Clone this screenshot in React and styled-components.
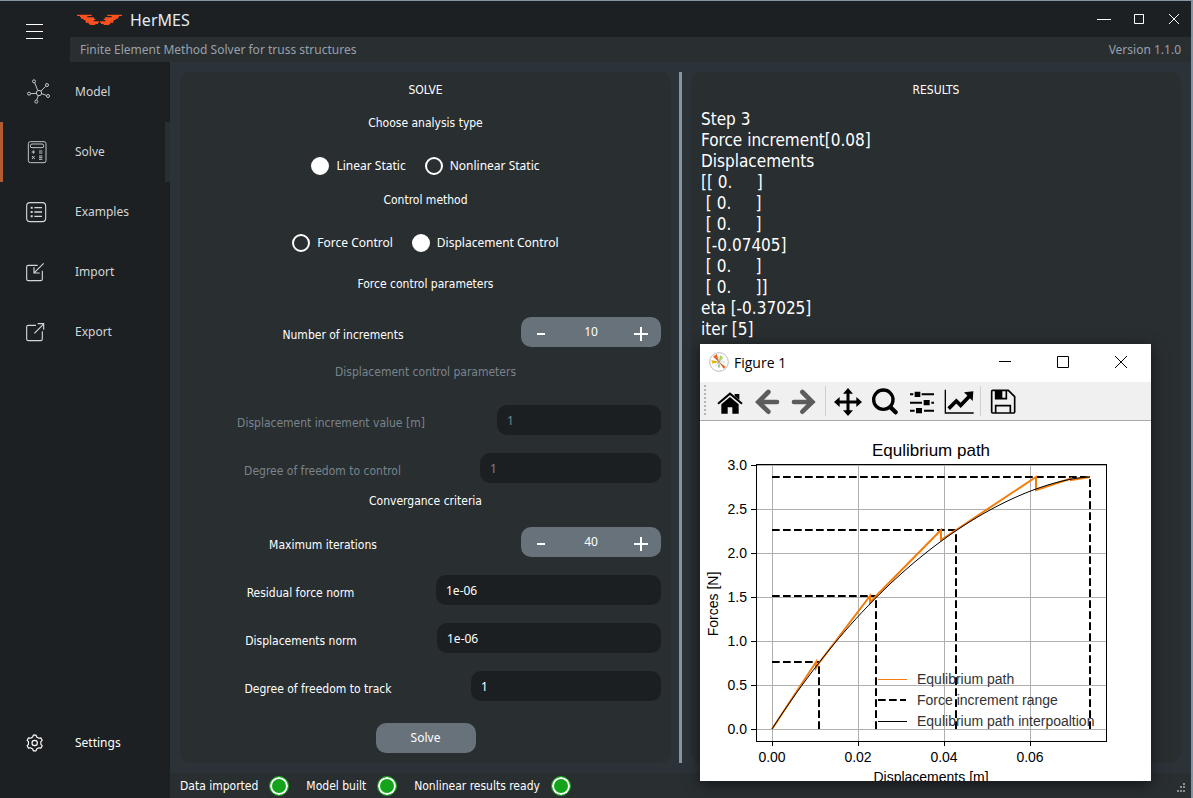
import React, { useState } from "react";
import styled, { createGlobalStyle } from "styled-components";

const c = {
  dark: "#1c2022",
  panel: "#292e31",
  field: "#1c1f21",
  body: "#2c3338",
  button: "#68727b",
  edge: "#8496a5",
  muted: "#7a848c",
  text: "#ffffff",
};

const wide = `"Noto Sans", sans-serif`;

const GlobalStyle = createGlobalStyle`
  *, *::before, *::after { box-sizing: border-box; }
  body { margin: 0; background: ${c.dark}; }
  button, input { font: inherit; color: inherit; }
  h1, h2, p, pre { margin: 0; font: inherit; }
`;

const Shell = styled.div`
  position: relative;
  display: flex;
  flex-direction: column;
  min-height: 100vh;
  border-top: 1px solid ${c.edge};
  border-right: 2px solid ${c.edge};
  background: ${c.dark};
  color: ${c.text};
  font: 12px/16px "DejaVu Sans Condensed", "Noto Sans", sans-serif;
`;

const Top = styled.header`
  display: flex;
`;

const MenuButton = styled.button`
  width: 70px;
  border: 0;
  padding: 0;
  background: none;
  svg { display: block; margin: 0 26px; }
`;

const TopColumn = styled.div`
  flex: 1;
`;

const TitleBar = styled.div`
  display: flex;
  align-items: center;
  height: 36px;
  padding-left: 7px;
`;

const LogoArt = styled.svg`
  margin-top: 2px;
`;

const AppName = styled.h1`
  flex: 1;
  padding: 2px 0 0 8px;
  font: 16px/22px ${wide};
  color: #e3ebf2;
`;

const WindowButton = styled.button`
  display: grid;
  place-items: center;
  width: 35px;
  height: 36px;
  border: 0;
  padding: 0;
  background: none;
`;

const SubBar = styled.div`
  display: flex;
  justify-content: space-between;
  padding: 0 10px;
  background: ${c.panel};
  color: #98a1ab;
  font: 12px/25px ${wide};
`;

const Body = styled.div`
  display: flex;
  flex: 1;
`;

const Nav = styled.nav`
  display: flex;
  flex-direction: column;
  width: 170px;
  padding-bottom: 25px;
`;

const NavItem = styled.a`
  display: flex;
  align-items: center;
  gap: 24px;
  height: 60px;
  padding-left: 20px;
  border-left: 3px solid ${(p) => (p.$active ? "#b35c33" : "transparent")};
  border-right: 5px solid ${(p) => (p.$active ? c.panel : "transparent")};
  margin-top: ${(p) => (p.$last ? "auto" : "0")};
  color: ${(p) => (p.$last ? "#ffffff" : "#d3d6d8")};
  font-family: ${wide};
  text-decoration: none;
`;

const Main = styled.main`
  display: flex;
  flex: 1;
  flex-direction: column;
  background: ${c.body};
`;

const Panels = styled.div`
  display: grid;
  grid-template-columns: minmax(0, 491fr) 20px minmax(0, 490fr);
  flex: 1;
  padding: 10px;
`;

const Panel = styled.section`
  padding: 10px;
  border-radius: 10px;
  background: ${c.panel};
`;

const Splitter = styled.div`
  width: 3px;
  margin-left: 8px;
  background: ${c.edge};
`;

const Title = styled.h2`
  text-align: center;
  color: ${(p) => (p.$muted ? c.muted : c.text)};
`;

const Group = styled.div`
  display: flex;
  flex-direction: column;
  gap: ${(p) => p.$gap}px;
  padding-top: ${(p) => p.$top}px;
`;

const Fields = styled.div`
  display: flex;
  flex-direction: column;
  gap: 18px;
`;

const Radios = styled.div`
  display: flex;
  justify-content: center;
  gap: 19px;
`;

const RadioLabel = styled.label`
  display: flex;
  align-items: center;
  gap: 7px;
  font: 12px/18px ${wide};
`;

const RadioInput = styled.input`
  appearance: none;
  width: 18px;
  height: 18px;
  margin: 0;
  border: 2px solid #fff;
  border-radius: 50%;
  background: ${c.panel};
  &:checked { background: #fff; }
`;

const Row = styled.div`
  display: grid;
  grid-template-columns: ${(p) => p.$columns};
  column-gap: ${(p) => p.$gap || 25}px;
  color: ${(p) => (p.$muted ? c.muted : c.text)};
`;

const RowLabel = styled.label`
  padding-top: 10px;
  text-align: center;
  white-space: nowrap;
`;

const TextBox = styled.input`
  width: 100%;
  min-width: 0;
  height: 30px;
  padding: 0 10px;
  border: 0;
  border-radius: 10px;
  background: ${c.field};
  font-family: ${wide};
  &:disabled { color: ${c.muted}; }
`;

const Spinner = styled.div`
  display: flex;
  height: 30px;
  border-radius: 10px;
  background: ${c.button};
`;

const StepButton = styled.button`
  width: 40px;
  border: 0;
  padding: 0;
  background: none;
  svg { display: block; margin: 4px auto 0; }
`;

const StepValue = styled.input`
  width: 60px;
  border: 0;
  padding: 0;
  background: none;
  font-family: ${wide};
  text-align: center;
`;

const SolveButton = styled.button`
  display: block;
  width: 100px;
  height: 30px;
  margin: 22px auto 0;
  border: 0;
  border-radius: 10px;
  background: ${c.button};
  font-family: ${wide};
`;

const Output = styled.pre`
  padding-top: 11px;
  font-size: 17px;
  line-height: 21px;
  white-space: pre;
`;

const StatusBar = styled.footer`
  display: flex;
  align-items: center;
  gap: 17px;
  height: 25px;
  padding: 0 5px 0 10px;
  background: ${c.panel};
`;

const Status = styled.span`
  display: flex;
  align-items: center;
  gap: 11px;
`;

const Led = styled.i`
  width: 20px;
  height: 20px;
  border: 1px solid #17a51d;
  border-radius: 50%;
  background: #14a31a;
  box-shadow: inset 0 0 0 2px #fff;
`;

const Grip = styled.svg`
  margin: 5px 0 0 auto;
`;

const Figure = styled.div`
  position: absolute;
  right: 40px;
  bottom: 17px;
  width: 451px;
  overflow: hidden;
  background: #fff;
  color: #000;
  box-shadow: 0 3px 14px rgba(0, 0, 0, 0.55);
`;

const FigureBar = styled.div`
  display: flex;
  align-items: center;
  height: 38px;
  padding: 0 1px 2px 9px;
`;

const FigureTitle = styled.h2`
  flex: 1;
  padding: 2px 0 0 5px;
  font: 14px/20px "Open Sans", sans-serif;
`;

const FigureButton = styled(WindowButton)`
  width: 58px;
`;

const Toolbar = styled.div`
  display: flex;
  align-items: center;
  height: 39px;
  padding-left: 4px;
  border-bottom: 1px solid #a9a9a9;
  background: #f0f0f0;
`;

const Handle = styled.span`
  width: 2px;
  height: 32px;
  margin-right: 5px;
  background: repeating-linear-gradient(#b4b4b4 0 2px, transparent 2px 4px);
`;

const Tool = styled.button`
  display: grid;
  place-items: center;
  width: 37px;
  height: 36px;
  border: 0;
  padding: 2px 0 0;
  background: none;
`;

const ToolRule = styled.span`
  width: 1px;
  height: 30px;
  margin: 0 3px;
  background: #cfcfcf;
`;

const Plot = styled.svg`
  display: block;
  width: 100%;
  font-family: "Liberation Sans", Arial, sans-serif;
  font-size: 14px;
`;

function gearPath(cx, cy) {
  const at = (r, deg) => {
    const a = (deg * Math.PI) / 180;
    return `${(cx + r * Math.cos(a)).toFixed(1)} ${(cy + r * Math.sin(a)).toFixed(1)}`;
  };
  const pts = [];
  for (let k = 0; k < 6; k++) {
    const a = -90 + 60 * k;
    pts.push(at(24, a - 10), at(24, a + 10), at(19, a + 18), at(19, a + 42));
  }
  return `M${pts.join("L")}Z`;
}

const navItems = [
  {
    name: "Model",
    box: "69 234 84 84",
    art: (
      <>
        <circle cx="117" cy="279" r="8" />
        <circle cx="102" cy="244" r="4.5" />
        <circle cx="141" cy="255" r="4.5" />
        <circle cx="144" cy="288" r="4.5" />
        <circle cx="109" cy="305" r="4.5" />
        <circle cx="87" cy="281" r="4.5" />
        <path d="M104 248L113 271M137 259L123 273M139 286L125 281M110 300L115 287M92 281L109 280" />
      </>
    ),
    thin: true,
  },
  {
    name: "Solve",
    box: "69 414 84 84",
    art: (
      <>
        <rect x="85" y="425" width="53" height="63" rx="6" />
        <rect x="91" y="432" width="40" height="11" rx="5" />
        <path d="M95 456H105M100 451V461M117 453H127M117 459H127M96 468L104 477M104 468L96 477M117 468H127M117 473H127M117 478H127" />
      </>
    ),
    thin: true,
  },
  {
    name: "Examples",
    box: "69 54 84 84",
    art: (
      <>
        <rect x="80" y="68" width="57" height="57" rx="10" />
        <path d="M103 83H126M103 96H126M103 109H126" strokeWidth="4" />
        <path d="M92 83H98M92 96H98M92 109H98" strokeWidth="6" />
      </>
    ),
  },
  {
    name: "Import",
    box: "69 234 84 84",
    art: (
      <>
        <path d="M113 256H85Q80 256 80 261V297Q80 302 85 302H122Q127 302 127 297V272" />
        <path d="M131 250L103 278M102 262V279H119" />
      </>
    ),
  },
  {
    name: "Export",
    box: "69 414 84 84",
    art: (
      <>
        <path d="M108 436H85Q80 436 80 441V477Q80 482 85 482H122Q127 482 127 477V454" />
        <path d="M103 460L130 433M113 431H131V449" />
      </>
    ),
  },
];

function NavIcon({ box, thin, children }) {
  return (
    <svg width="28" height="28" viewBox={box} fill="none" stroke="currentColor" strokeWidth={thin ? 2.7 : 3.4} aria-hidden="true">
      {children}
    </svg>
  );
}

function Logo() {
  const wing = (
    <path d="M231 46H275M240 50H262M243 54H282M250 58H286M256 62H281M257 66H297M266 70H294M269 73H286" />
  );
  return (
    <LogoArt width="45" height="12" viewBox="231 42 135 36" fill="none" stroke="#f8501f" strokeWidth="3.8" aria-hidden="true">
      {wing}
      <g transform="translate(597 0) scale(-1 1)">{wing}</g>
    </LogoArt>
  );
}

function FieldRow({ id, label, value, muted, split }) {
  return (
    <Row $muted={muted} $columns={`minmax(0, ${split[0]}fr) minmax(0, ${split[1]}fr)`}>
      <RowLabel htmlFor={id}>{label}</RowLabel>
      <TextBox id={id} defaultValue={value} disabled={muted} />
    </Row>
  );
}

function SpinRow({ id, label, start, gap }) {
  const [value, setValue] = useState(start);
  return (
    <Row $columns="minmax(0, 1fr) 140px" $gap={gap}>
      <RowLabel htmlFor={id}>{label}</RowLabel>
      <Spinner>
        <StepButton aria-label={`Decrease ${label}`} onClick={() => setValue(value - 1)}>
          <svg width="16" height="16" viewBox="0 0 16 16" stroke="#fff" strokeWidth="2">
            <path d="M4 8H12" />
          </svg>
        </StepButton>
        <StepValue id={id} value={value} onChange={(e) => setValue(Number(e.target.value) || 0)} />
        <StepButton aria-label={`Increase ${label}`} onClick={() => setValue(value + 1)}>
          <svg width="16" height="16" viewBox="0 0 16 16" stroke="#fff" strokeWidth="2">
            <path d="M1 8H15M8 1V15" />
          </svg>
        </StepButton>
      </Spinner>
    </Row>
  );
}

function Radio({ name, label, checked }) {
  return (
    <RadioLabel>
      <RadioInput type="radio" name={name} defaultChecked={checked} />
      {label}
    </RadioLabel>
  );
}

const output = `Step 3
Force increment[0.08]
Displacements
[[ 0.     ]
 [ 0.     ]
 [ 0.     ]
 [-0.07405]
 [ 0.     ]
 [ 0.     ]]
eta [-0.37025]
iter [5]`;

const tools = [
  {
    name: "Home",
    cx: 105,
    art: (
      <>
        <path d="M69 191L105 161L141 191" fill="none" stroke="#000" strokeWidth="6" />
        <path d="M79 193L105 171L131 193V221H112V202H98V221H79ZM119 162H133V180L119 168Z" />
      </>
    ),
  },
  {
    name: "Back",
    cx: 216,
    art: <path d="M220 156L190 186L220 215M192 186H246" fill="none" stroke="#5c5c5c" strokeWidth="14" strokeLinecap="round" />,
  },
  {
    name: "Forward",
    cx: 327,
    art: <path d="M322 156L352 186L322 215M297 186H350" fill="none" stroke="#5c5c5c" strokeWidth="14" strokeLinecap="round" />,
    rule: true,
  },
  {
    name: "Pan",
    cx: 459,
    art: (
      <>
        <path d="M427 186H491M459 154V218" stroke="#000" strokeWidth="9" />
        <path d="M417 186L434 171V201ZM501 186L484 171V201ZM459 144L444 161H474ZM459 228L444 211H474Z" />
      </>
    ),
  },
  {
    name: "Zoom",
    cx: 570,
    art: (
      <g fill="none" stroke="#000" strokeLinecap="round">
        <circle cx="565" cy="179" r="29" strokeWidth="10" />
        <path d="M588 203L602 217" strokeWidth="13" />
      </g>
    ),
  },
  {
    name: "Configure subplots",
    cx: 681,
    art: (
      <>
        <path d="M645 163H655M680 163H717M645 188H681M709 188H717M645 212H659M687 212H717" stroke="#000" strokeWidth="6" />
        <path d="M659 155H676V171H659ZM686 180H704V196H686ZM663 204H681V220H663Z" />
      </>
    ),
  },
  {
    name: "Edit axis",
    cx: 792,
    art: (
      <>
        <path d="M751 149V219H836" fill="none" stroke="#000" strokeWidth="4" />
        <path d="M761 206L784 183L797 196L824 168" fill="none" stroke="#000" strokeWidth="11" />
        <path d="M807 157L835 154L833 183Z" />
      </>
    ),
    rule: true,
  },
  {
    name: "Save",
    cx: 924,
    art: (
      <>
        <path
          d="M893 151H940L959 170V216Q959 219 956 219H893Q890 219 890 216V154Q890 151 893 151ZM902 219V197H946V219M934 151V176H902V151"
          fill="none"
          stroke="#000"
          strokeWidth="5"
        />
        <path d="M902 151H922V176H902Z" />
      </>
    ),
  },
];

// Plot coordinates: 1.0 N is 88 px high, 0.02 m is 86 px wide.
const yOf = (n) => 308 - n * 88;
const xOf = (m) => 72 + m * 4300;

const steps = [
  [119, 241],
  [176, 175],
  [256, 109],
  [390, 56],
];

// Softening response: the slope falls to zero at the last increment.
const interpolation = Array.from({ length: 54 }, (_, i) => {
  const u = i / 53;
  const f = 1 - Math.pow(1 - u, 1.95 - 0.28 * u);
  return `${72 + 318 * u} ${(308 - 252 * f).toFixed(2)}`;
}).join("L");

function Chart() {
  const ys = [0, 0.5, 1, 1.5, 2, 2.5, 3];
  const xs = [0, 0.02, 0.04, 0.06];
  return (
    <Plot viewBox="0 0 451 360" role="img" aria-label="Equlibrium path">
      <g stroke="#b0b0b0" shapeRendering="crispEdges">
        {ys.map((v) => <path key={v} d={`M56 ${yOf(v) + 0.5}H406`} />)}
        {xs.map((v) => <path key={v} d={`M${xOf(v) + 0.5} 43V320`} />)}
      </g>
      <g stroke="#000" strokeWidth="2" strokeDasharray="7.7 3.3">
        {steps.map(([x, y]) => <path key={x} d={`M72 ${y}H${x}M${x} 308V${y}`} />)}
      </g>
      <path
        d="M72 308L116 241V247L119 242L170 175V182L176 175L241 109V119L256 109L336 56V69L371 57.500V59L390 56"
        fill="none"
        stroke="#f57c0a"
        strokeWidth="2"
      />
      <path d={`M${interpolation}`} fill="none" stroke="#000" />
      <path d="M56.500 43.500H406.500V320.500H56.500Z" fill="none" stroke="#000" shapeRendering="crispEdges" />
      <g stroke="#000" shapeRendering="crispEdges">
        {ys.map((v) => <path key={v} d={`M51 ${yOf(v) + 0.5}H56`} />)}
        {xs.map((v) => <path key={v} d={`M${xOf(v) + 0.5} 321V325`} />)}
      </g>
      <path d="M178 258.500H207" stroke="#f57c0a" />
      <path d="M178 279H206" stroke="#000" strokeWidth="2" strokeDasharray="7.7 3.3" />
      <path d="M178 300.500H207" stroke="#000" />
      <g fill="#333">
        <text x="217" y="263">Equlibrium path</text>
        <text x="217" y="284">Force increment range</text>
        <text x="217" y="305">Equlibrium path interpoaltion</text>
      </g>
      <text x="231" y="35" textAnchor="middle" fontSize="17">Equlibrium path</text>
      <g textAnchor="end">
        {ys.map((v) => <text key={v} x="47" y={yOf(v) + 5}>{v.toFixed(1)}</text>)}
      </g>
      <g textAnchor="middle">
        {xs.map((v) => <text key={v} x={xOf(v)} y="341">{v.toFixed(2)}</text>)}
        <text x="231" y="361">Displacements [m]</text>
        <text transform="translate(18 183) rotate(-90)">Forces [N]</text>
      </g>
    </Plot>
  );
}

function FigureWindow() {
  return (
    <Figure>
      <FigureBar>
        <svg width="20" height="20" viewBox="0 0 60 60" aria-hidden="true">
          <circle cx="30" cy="30" r="28" fill="#fff" stroke="#bbb" strokeWidth="3" />
          <path d="M30 30L12 14L23 6Z" fill="#f0641e" />
          <path d="M30 30L7 24L10 35Z" fill="#f5b800" />
          <path d="M30 30L34 10L42 15Z" fill="#a6d854" />
          <path d="M30 30L44 50L50 44Z" fill="#f0641e" />
          <path d="M30 30L26 46L33 46Z" fill="#8fd19e" />
          <path d="M12 30H48M30 12V48M18 18L42 42M42 18L18 42" stroke="#777" strokeWidth="1" />
        </svg>
        <FigureTitle>Figure 1</FigureTitle>
        <FigureButton aria-label="Minimize figure">
          <svg width="12" height="12" stroke="#000"><path d="M0 5.500H12" /></svg>
        </FigureButton>
        <FigureButton aria-label="Maximize figure">
          <svg width="12" height="12" stroke="#000" fill="none"><path d="M.5.5H11.500V11.500H.5Z" /></svg>
        </FigureButton>
        <FigureButton aria-label="Close figure">
          <svg width="12" height="12" stroke="#000"><path d="M0 0L12 12M12 0L0 12" /></svg>
        </FigureButton>
      </FigureBar>
      <Toolbar>
        <Handle />
        {tools.map((t) => (
          <React.Fragment key={t.name}>
            <Tool aria-label={t.name}>
              <svg width="30" height="28" viewBox={`${t.cx - 45} 144 90 84`}>{t.art}</svg>
            </Tool>
            {t.rule && <ToolRule />}
          </React.Fragment>
        ))}
      </Toolbar>
      <Chart />
    </Figure>
  );
}

export default function App() {
  return (
    <>
      <GlobalStyle />
      <Shell>
        <Top>
          <MenuButton aria-label="Menu">
            <svg width="17" height="17" stroke="#fff"><path d="M0 1.500H17M0 8.500H17M0 15.500H17" /></svg>
          </MenuButton>
          <TopColumn>
            <TitleBar>
              <Logo />
              <AppName>HerMES</AppName>
              <WindowButton aria-label="Minimize">
                <svg width="14" height="12" stroke="#fff"><path d="M0 6.500H14" /></svg>
              </WindowButton>
              <WindowButton aria-label="Maximize">
                <svg width="10" height="10" stroke="#fff" fill="none"><path d="M.5.5H9.500V9.500H.5Z" /></svg>
              </WindowButton>
              <WindowButton aria-label="Close">
                <svg width="10" height="10" stroke="#fff"><path d="M0 0L10 10M10 0L0 10" /></svg>
              </WindowButton>
            </TitleBar>
            <SubBar>
              <p>Finite Element Method Solver for truss structures</p>
              <p>Version 1.1.0</p>
            </SubBar>
          </TopColumn>
        </Top>
        <Body>
          <Nav>
            {navItems.map((n) => (
              <NavItem key={n.name} href="#" $active={n.name === "Solve"}>
                <NavIcon box={n.box} thin={n.thin}>{n.art}</NavIcon>
                {n.name}
              </NavItem>
            ))}
            <NavItem href="#" $last>
              <NavIcon box="69 87 84 84">
                <path d={gearPath(104, 129)} strokeLinejoin="round" />
                <circle cx="104" cy="129" r="8" />
              </NavIcon>
              Settings
            </NavItem>
          </Nav>
          <Main>
            <Panels>
              <Panel>
                <Title>SOLVE</Title>
                <Group $top={17} $gap={26}>
                  <Title>Choose analysis type</Title>
                  <Radios>
                    <Radio name="analysis" label="Linear Static" checked />
                    <Radio name="analysis" label="Nonlinear Static" />
                  </Radios>
                </Group>
                <Group $top={17} $gap={26}>
                  <Title>Control method</Title>
                  <Radios>
                    <Radio name="control" label="Force Control" />
                    <Radio name="control" label="Displacement Control" checked />
                  </Radios>
                </Group>
                <Group $top={24} $gap={25}>
                  <Title>Force control parameters</Title>
                  <SpinRow id="increments" label="Number of increments" start={10} gap={25} />
                </Group>
                <Group $top={17} $gap={25}>
                  <Title $muted>Displacement control parameters</Title>
                  <Fields>
                    <FieldRow id="step" label="Displacement increment value [m]" value="1" muted split={[282, 164]} />
                    <FieldRow id="dof" label="Degree of freedom to control" value="1" muted split={[265, 181]} />
                  </Fields>
                </Group>
                <Group $top={10} $gap={18}>
                  <Title>Convergance criteria</Title>
                  <Fields>
                    <SpinRow id="iterations" label="Maximum iterations" start={40} gap={65} />
                    <FieldRow id="residual" label="Residual force norm" value="1e-06" split={[221, 225]} />
                    <FieldRow id="norm" label="Displacements norm" value="1e-06" split={[222, 224]} />
                    <FieldRow id="track" label="Degree of freedom to track" value="1" split={[256, 190]} />
                  </Fields>
                </Group>
                <SolveButton>Solve</SolveButton>
              </Panel>
              <Splitter />
              <Panel>
                <Title>RESULTS</Title>
                <Output>{output}</Output>
              </Panel>
            </Panels>
            <StatusBar>
              <Status>Data imported <Led /></Status>
              <Status>Model built <Led /></Status>
              <Status>Nonlinear results ready <Led /></Status>
              <Grip width="10" height="10" fill="#8b8f92" aria-hidden="true">
                <path d="M7 0h2v2h-2zM4 3h2v2h-2zM7 3h2v2h-2zM1 7h2v2h-2zM4 7h2v2h-2zM7 7h2v2h-2z" />
              </Grip>
            </StatusBar>
          </Main>
        </Body>
        <FigureWindow />
      </Shell>
    </>
  );
}
